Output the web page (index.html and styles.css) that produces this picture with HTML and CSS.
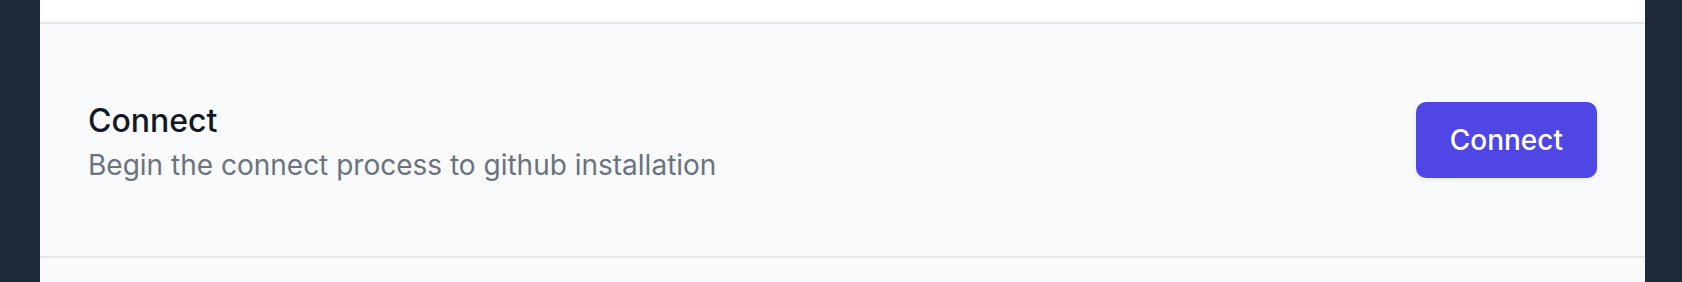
FILE: index.html
```html
<!DOCTYPE html>
<html lang="en">

<head>
    <meta charset="UTF-8">
    <meta name="viewport" content="width=device-width, initial-scale=1.0">
    <title>Connect</title>
    <link rel="stylesheet" href="styles.css">
</head>

<body>
    <div class="panel">
        <div class="panel-top"></div>

        <!-- Fila de conexion -->
        <div class="connect-row">
            <div class="connect-text">
                <h3>Connect</h3>
                <p>Begin the connect process to github installation</p>
            </div>
            <button type="button">Connect</button>
        </div>

        <div class="panel-bottom"></div>
    </div>
</body>

</html>
```

FILE: styles.css
```css
* {
    box-sizing: border-box;
    margin: 0;
    padding: 0;
}

html, body {
    height: 100%;
}

body {
    background-color: #1f2937;
    font-family: Inter, 'Noto Sans', sans-serif;
    overflow: hidden;
}

.panel {
    margin: 0 37px 0 40px;
    height: 100%;
    background-color: #f9fafb;
    display: flex;
    flex-direction: column;
}

.panel-top {
    height: 22px;
    background-color: #ffffff;
}

.connect-row {
    display: flex;
    align-items: center;
    justify-content: space-between;
    height: 236px;
    padding: 0 48px;
    border-top: 2px solid #e5e7eb;
    border-bottom: 2px solid #e5e7eb;
}

.connect-text h3 {
    font-size: 32px;
    line-height: 48px;
    font-weight: 500;
    color: #111827;
    margin-top: 2px;
}

.connect-text p {
    font-size: 28px;
    line-height: 40px;
    color: #6b7280;
}

button {
    background-color: #4f46e5;
    color: #ffffff;
    font-family: inherit;
    font-size: 28px;
    line-height: 40px;
    font-weight: 500;
    padding: 18px 34px;
    border: none;
    border-radius: 10px;
    box-shadow: 0 2px 4px rgba(0, 0, 0, 0.08);
    cursor: pointer;
}

button:hover {
    background-color: #4338ca;
}

.panel-bottom {
    flex: 1;
}
```
